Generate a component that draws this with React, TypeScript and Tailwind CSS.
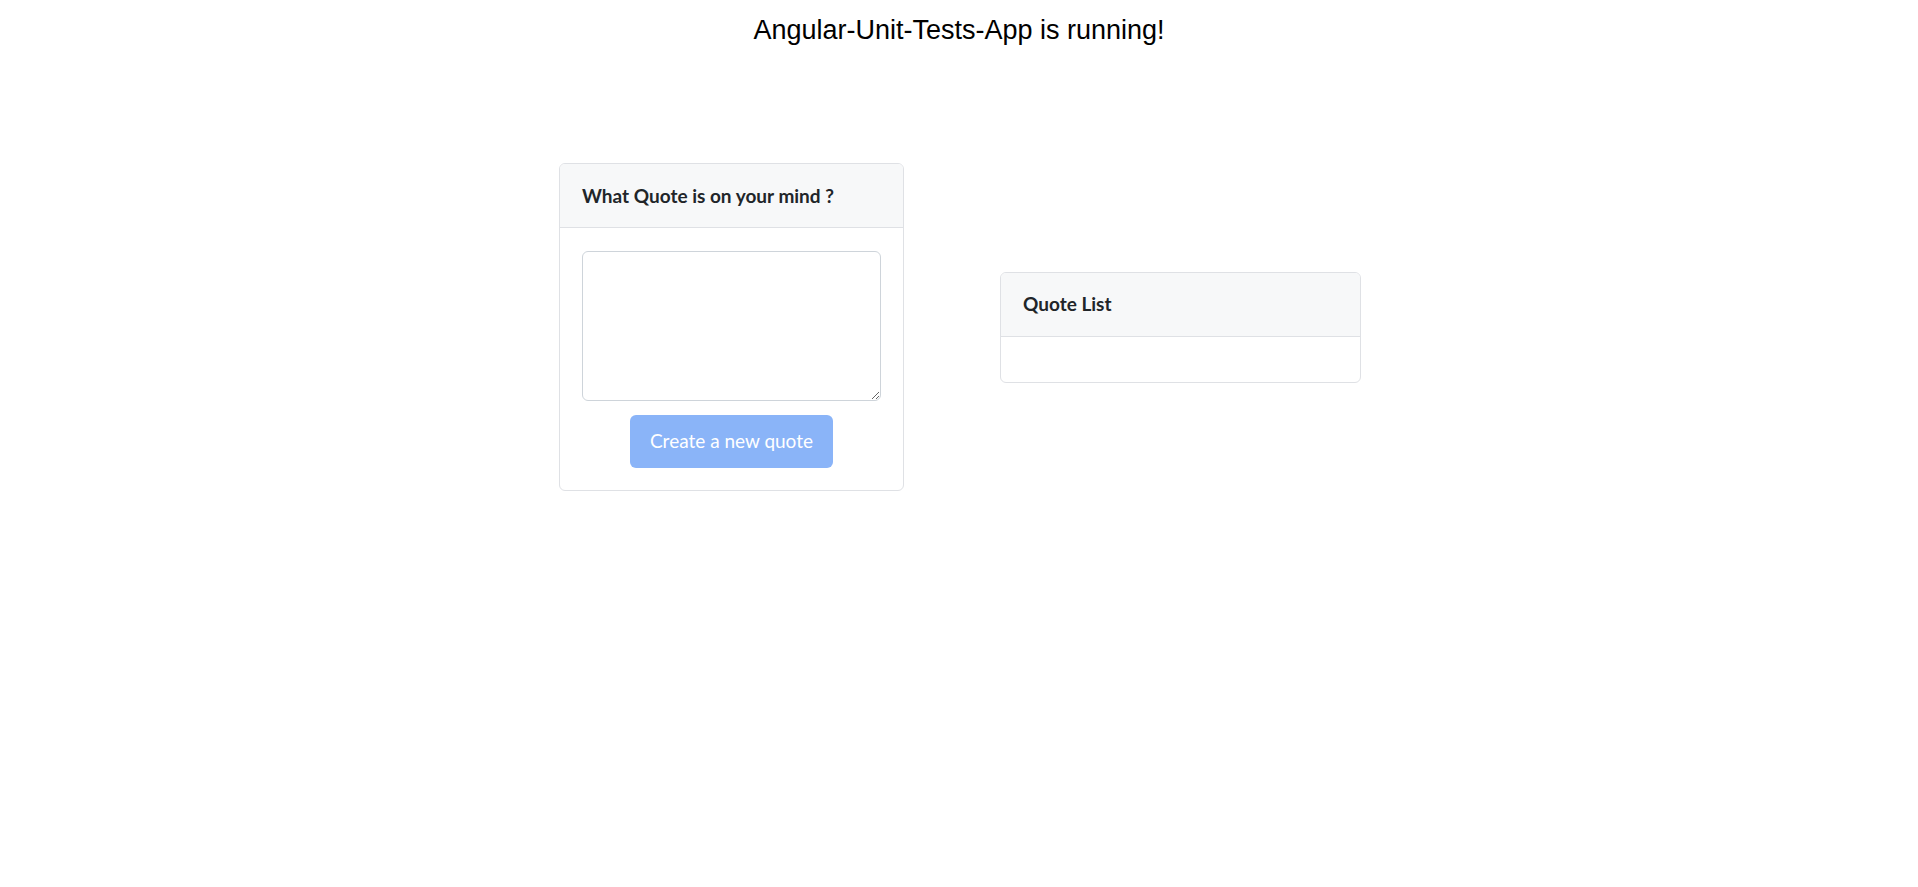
import React from "react";

export default function App() {
  const ui = { fontFamily: '"Segoe UI", Lato, sans-serif' };
  return (
    <div className="min-h-[887px] w-full bg-white">
      <h1
        className="pt-[15px] text-center text-[27px] leading-[31px] font-normal text-black"
        style={{ fontFamily: '"Liberation Sans", Arial, sans-serif' }}
      >
        Angular-Unit-Tests-App is running!
      </h1>
      <div className="mt-[117px] flex items-center justify-center gap-[96px] pl-[2px]" style={ui}>
        <div className="flex w-[345px] flex-col overflow-hidden rounded-[6px] border border-[#dfe1e5] bg-white">
          <div className="flex h-[64px] items-center border-b border-[#dfe1e5] bg-[#f7f8f9] px-[22px] pt-[1px] text-[19px] font-bold text-[#212529]">
            What Quote is on your mind ?
          </div>
          <div className="flex flex-col items-center px-[22px] pt-[23px] pb-[22px]">
            <textarea className="h-[150px] w-full rounded-[6px] border border-[#ced4da] bg-white"></textarea>
            <button
              disabled
              className="mt-[14px] h-[53px] w-[203px] rounded-[6px] bg-[#8ab4f8] text-[19px] text-white"
            >
              Create a new quote
            </button>
          </div>
        </div>
        <div className="flex w-[361px] flex-col overflow-hidden rounded-[6px] border border-[#dfe1e5] bg-white">
          <div className="flex h-[64px] items-center border-b border-[#dfe1e5] bg-[#f7f8f9] px-[22px] pt-[1px] text-[19px] font-bold text-[#212529]">
            Quote List
          </div>
          <div className="h-[45px]"></div>
        </div>
      </div>
    </div>
  );
}
